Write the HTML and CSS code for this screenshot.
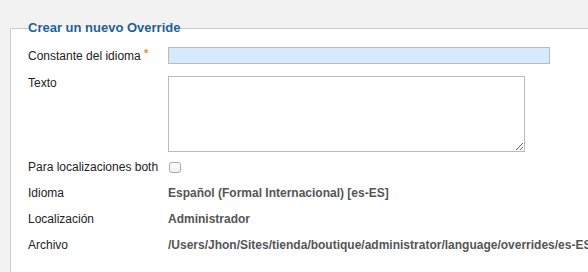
FILE: index.html
```html
<!DOCTYPE html>
<html lang="es">
<head>
  <meta charset="UTF-8" />
  <title>Crear un nuevo Override</title>
  <link rel="stylesheet" href="styles.css">
</head>
<body>
<form class="override-form">
  <fieldset class="box">
    <legend>Crear un nuevo Override</legend>

    <div class="row row-first">
      <label for="key">Constante del idioma <span class="star">*</span></label>
      <input type="text" id="key" class="text-input">
    </div>

    <div class="row row-area">
      <label for="override">Texto</label>
      <textarea id="override"></textarea>
    </div>

    <div class="row row-check">
      <label for="both">Para localizaciones both</label>
      <input type="checkbox" id="both" class="check">
    </div>

    <div class="row">
      <label>Idioma</label>
      <span class="value">Español (Formal Internacional) [es-ES]</span>
    </div>
    <div class="row">
      <label>Localización</label>
      <span class="value">Administrador</span>
    </div>
    <div class="row">
      <label>Archivo</label>
      <span class="value">/Users/Jhon/Sites/tienda/boutique/administrator/language/overrides/es-ES.override.ini</span>
    </div>
  </fieldset>
</form>
</body>
</html>
```

FILE: styles.css
```css
* { margin: 0; padding: 0; box-sizing: border-box; }

html, body {
  height: 100%;
  overflow: hidden;
  background: #f2f2f2;
  font-family: "Liberation Sans", Arial, sans-serif;
  font-size: 12px;
  color: #222;
}

.override-form {
  padding-top: 20px;
}

.box {
  margin-left: 10px;
  width: 640px;
  border: 1px solid #ccc;
  border-bottom: 0;
  background: #fff;
  padding: 9px 0 0 17px;
  min-height: 260px;
}

.box legend {
  font-size: 13px;
  font-weight: bold;
  color: #1e5f99;
  line-height: 16px;
  padding: 0;
}

.row {
  display: grid;
  grid-template-columns: 140px 1fr;
  align-items: center;
  min-height: 17px;
  margin-bottom: 9px;
}

.row label {
  line-height: 17px;
  white-space: nowrap;
}

.star {
  color: #f08c1c;
  font-weight: bold;
  font-size: 11px;
  vertical-align: 3px;
}

.row-first {
  margin-bottom: 11px;
}

.text-input {
  width: 382px;
  height: 17px;
  border: 1px solid #bbb;
  background: #d5eafc;
  font: inherit;
}

.row-area {
  align-items: start;
  margin-bottom: 7px;
}

.row-area label {
  line-height: 14px;
}

textarea {
  width: 357px;
  height: 76px;
  border: 1px solid #bbb;
  background: #fff;
  font: inherit;
}

.check {
  appearance: none;
  -webkit-appearance: none;
  width: 12px;
  height: 11px;
  margin-left: 1px;
  border: 1px solid #a9a9a9;
  border-radius: 3px;
  background: linear-gradient(#fff, #f0f0f0);
}

.value {
  font-weight: bold;
  color: #555;
  white-space: nowrap;
  line-height: 17px;
}
```
